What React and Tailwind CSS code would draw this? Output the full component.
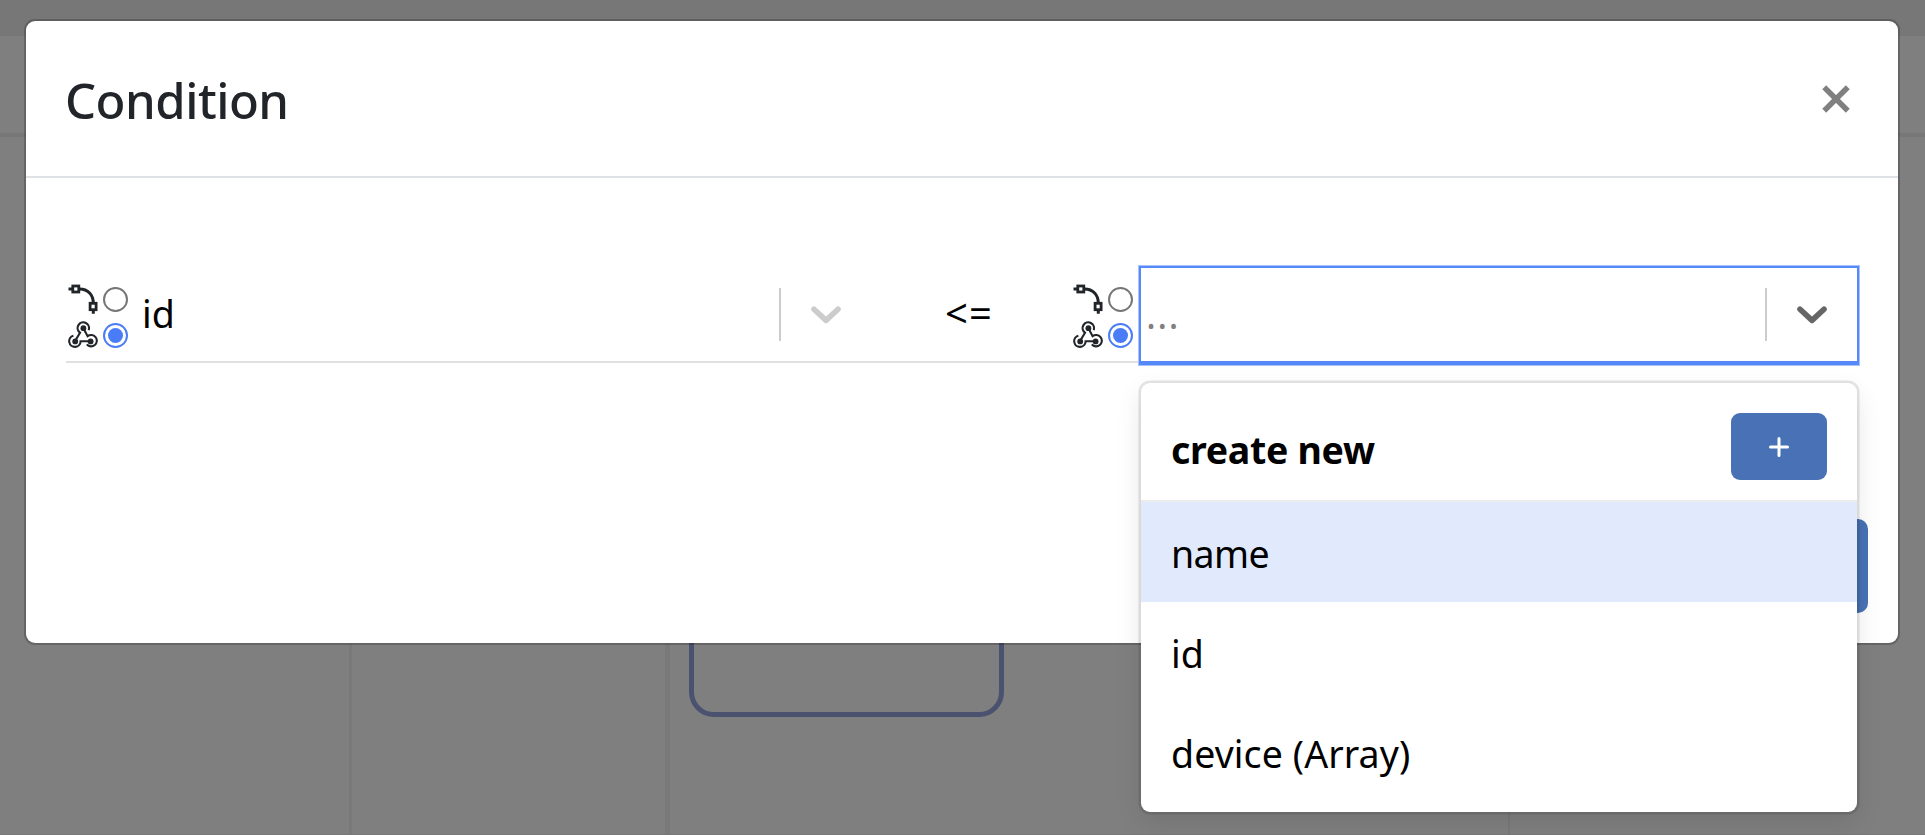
import React from 'react';

function CurveIcon() {
  return (
    <svg className="block h-[30px] w-[30px]" viewBox="0 0 30 30" fill="none" stroke="#212529">
      <path d="M0.5 5H4M11.5 5C20 5 25.3 11 25.3 19M25.3 26.5V29.8" strokeWidth="3" />
      <rect x="4.8" y="2" width="6" height="6" strokeWidth="2.8" />
      <rect x="22.1" y="19.3" width="6" height="6.4" strokeWidth="2.8" />
    </svg>
  );
}

function WebhookIcon() {
  return (
    <svg className="block h-[28px] w-[30px]" viewBox="0 0 30 28" fill="none" stroke="#212529" strokeWidth="2.1">
      <path d="M20.6 9.2A5.7 5.7 0 1 0 12 11.7L7.8 18.8" />
      <path d="M15.4 7.2L19.6 15.2A5.7 5.7 0 1 1 18.8 23.4" />
      <path d="M5.4 14.7A5.7 5.7 0 1 0 12.6 20.3H22" />
      <g fill="#212529" stroke="none">
        <circle cx="15.4" cy="7.2" r="2.9" />
        <circle cx="7.2" cy="20.4" r="2.9" />
        <circle cx="22.6" cy="20.4" r="2.9" />
      </g>
    </svg>
  );
}

function Radio({ checked }) {
  return checked ? (
    <span className="flex size-[25px] items-center justify-center rounded-full border-2 border-[#4a7cf8]">
      <span className="size-[15px] rounded-full bg-[#4a7cf8]" />
    </span>
  ) : (
    <span className="size-[25px] rounded-full border-2 border-[#767676]" />
  );
}

function SourceToggle() {
  return (
    <div className="flex h-[98px] w-[72px] shrink-0 flex-col pt-4 pl-0.5">
      <div className="flex h-9 items-center gap-[5px]">
        <CurveIcon />
        <Radio />
      </div>
      <div className="flex h-9 items-center gap-[5px]">
        <WebhookIcon />
        <Radio checked />
      </div>
    </div>
  );
}

function Chevron({ className }) {
  return (
    <svg className={className} viewBox="0 0 30 18" fill="none" stroke="currentColor" strokeWidth="5.6" strokeLinecap="round" strokeLinejoin="round">
      <path d="M3 3.2L15 14.4L27 3.2" />
    </svg>
  );
}

function Backdrop() {
  return (
    <div className="absolute inset-0 flex flex-col bg-[#7f7f7f]">
      <div className="h-9 shrink-0 bg-[#777777]" />
      <div className="h-[101px] shrink-0 border-b-4 border-[#777777]" />
      <div className="flex grow border-b border-[#777777]">
        <div className="w-[352px] border-r-[3px] border-[#797979]" />
        <div className="w-[318px] border-r-[5px] border-[#797979]" />
        <div className="w-[840px] border-r-2 border-[#797979] pl-[19px]">
          <div className="h-[580px] w-[315px] rounded-[25px] border-[5px] border-[#4a5270]" />
        </div>
      </div>
    </div>
  );
}

function Menu() {
  return (
    <div className="absolute top-[117px] left-[2px] z-10 h-[429px] w-[716px] rounded-[9px] bg-white shadow-[0_0_0_2.5px_rgba(0,0,0,0.1),0_10px_27px_rgba(0,0,0,0.1)]">
      <div className="flex h-[119px] items-start justify-between border-b-2 border-[#ececec] px-[30px] pt-[30px]">
        <span className="pt-3 font-bold tracking-[-0.3px]">create new</span>
        <button className="flex h-[67px] w-24 items-center justify-center rounded-[9px] bg-[#4872b5]">
          <svg className="size-5" viewBox="0 0 20 20" stroke="white" strokeWidth="3" strokeLinecap="round">
            <path d="M10 1.5V18.5M1.5 10H18.5" />
          </svg>
        </button>
      </div>
      <div className="flex h-[100px] items-center bg-[#e1eafd] pt-[3px] pl-[30px] tracking-[-0.6px]">name</div>
      <div className="flex h-[100px] items-center pt-[3px] pl-[30px]">id</div>
      <div className="flex h-[100px] items-center pt-[3px] pl-[30px] tracking-[0.1px]">device (Array)</div>
    </div>
  );
}

export default function App() {
  return (
    <div className="relative h-[835px] w-[1925px] overflow-hidden font-['Noto_Sans','Open_Sans',sans-serif] text-[37.5px] leading-[50px] text-black">
      <Backdrop />
      <div className="relative mx-[24px] pt-[19px]">
        <div className="h-[626px] w-[1876px] rounded-[11px] border-2 border-black/20 bg-white bg-clip-padding">
          <header className="flex h-[157px] items-center justify-between border-b-2 border-[#dee2e6] pr-12 pl-[39px]">
            <h1 className="pt-[3px] text-[49px] font-medium tracking-[-0.5px] text-[#212529]">Condition</h1>
            <svg className="size-[28px]" viewBox="0 0 28 28" stroke="#808080" strokeWidth="5.5">
              <path d="M2.2 2.2L25.8 25.8M25.8 2.2L2.2 25.8" />
            </svg>
          </header>
          <div className="flex pt-[87px] pl-10">
            <div className="flex h-[98px] w-[1072px] border-b-2 border-[#e0e0e0]">
              <SourceToggle />
              <div className="flex w-[734px] shrink-0 items-center pt-[3px]">
                <span className="grow pb-0.5 pl-1">id</span>
                <span className="h-[53px] w-0.5 bg-[#cccccc]" />
                <Chevron className="mr-[31px] ml-[30px] h-[18px] w-[30px] text-[#cccccc]" />
              </div>
              <div className="flex w-[199px] shrink-0 items-center pl-[73px] text-[40px] tracking-[1px]">&lt;=</div>
              <SourceToggle />
            </div>
            <div className="relative h-[101px] w-[722px] border border-[#a9c2fb]">
              <div className="flex h-[99px] items-center border-2 border-b-4 border-[#5489f7]">
                <span className="grow pl-[5px] tracking-[1.2px] text-[#808080]">...</span>
                <span className="h-[53px] w-0.5 bg-[#cccccc]" />
                <Chevron className="mr-[30px] ml-[30px] h-[18px] w-[30px] text-[#666666]" />
              </div>
              <Menu />
            </div>
          </div>
          <div className="flex justify-end pt-[153px] pr-[30px]">
            <button className="h-[94px] w-[130px] rounded-[10px] bg-[#4872b5]" />
          </div>
        </div>
      </div>
    </div>
  );
}
